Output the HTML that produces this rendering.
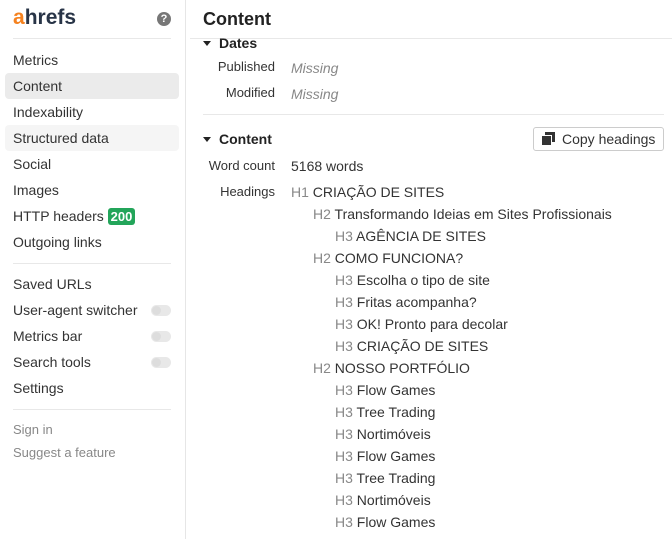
<!DOCTYPE html>
<html><head><meta charset="utf-8"><style>
*{margin:0;padding:0;box-sizing:border-box}
body{width:672px;height:539px;overflow:hidden;background:#fff;font-family:"Liberation Sans",sans-serif;font-size:14px;color:#333;position:relative}
.a{position:absolute;white-space:nowrap;line-height:18px}
.side{position:absolute;left:0;top:0;width:186px;height:539px;border-right:1px solid #e6e6e6}
.hl{position:absolute;left:5px;width:174px;height:26px;border-radius:4px}
.hr{position:absolute;height:1px;background:#e8e8e8}
.tg{position:absolute;left:151px;width:20px;height:11px;border-radius:6px;background:#e8e8e8}
.tg:after{content:"";position:absolute;left:1px;top:1px;width:9px;height:9px;border-radius:50%;background:#ddd}
.lab{text-align:right;width:85px;left:190px;font-size:13px}
.g{color:#888}
.b{font-weight:bold;color:#222}
.tri{position:absolute;width:0;height:0;border-left:4px solid transparent;border-right:4px solid transparent;border-top:5px solid #222}
</style></head><body>
<div class="side">
<div class="a" style="left:13px;top:6px;font-size:21px;font-weight:bold;line-height:24px;letter-spacing:0;color:#283447"><span style="color:#f5821f">a</span>hrefs</div>
<div style="position:absolute;left:157px;top:12px;width:14px;height:14px;border-radius:50%;background:#777;color:#fff;font-size:11px;font-weight:bold;text-align:center;line-height:14px">?</div>
<div class="hr" style="left:13px;top:38px;width:158px"></div>
<div class="hl" style="top:73px;background:#ebebeb"></div>
<div class="hl" style="top:125px;background:#f5f5f5"></div>
<div class="a" style="left:13px;top:51px">Metrics</div>
<div class="a" style="left:13px;top:77px">Content</div>
<div class="a" style="left:13px;top:103px">Indexability</div>
<div class="a" style="left:13px;top:129px">Structured data</div>
<div class="a" style="left:13px;top:155px">Social</div>
<div class="a" style="left:13px;top:181px">Images</div>
<div class="a" style="left:13px;top:207px">HTTP headers <span style="background:#23a55a;color:#fff;font-weight:bold;font-size:13px;padding:1px 3px;border-radius:3px">200</span></div>
<div class="a" style="left:13px;top:233px">Outgoing links</div>
<div class="hr" style="left:13px;top:263px;width:158px"></div>
<div class="a" style="left:13px;top:275px">Saved URLs</div>
<div class="a" style="left:13px;top:301px">User-agent switcher</div><div class="tg" style="top:305px"></div>
<div class="a" style="left:13px;top:327px">Metrics bar</div><div class="tg" style="top:331px"></div>
<div class="a" style="left:13px;top:353px">Search tools</div><div class="tg" style="top:357px"></div>
<div class="a" style="left:13px;top:379px">Settings</div>
<div class="hr" style="left:13px;top:409px;width:158px"></div>
<div class="a g" style="left:13px;top:421px;font-size:13px">Sign in</div>
<div class="a g" style="left:13px;top:444px;font-size:13px">Suggest a feature</div>
</div>
<div class="a b" style="left:203px;top:8px;font-size:18px;line-height:22px">Content</div>
<div class="hr" style="left:190px;top:38px;width:482px"></div>
<div class="tri" style="left:203px;top:41px"></div>
<div class="a b" style="left:219px;top:34px">Dates</div>
<div class="a lab" style="top:58px">Published</div>
<div class="a g" style="left:291px;top:59px;font-style:italic">Missing</div>
<div class="a lab" style="top:84px">Modified</div>
<div class="a g" style="left:291px;top:85px;font-style:italic">Missing</div>
<div class="hr" style="left:203px;top:114px;width:461px"></div>
<div class="tri" style="left:203px;top:137px"></div>
<div class="a b" style="left:219px;top:130px">Content</div>
<div style="position:absolute;left:533px;top:127px;width:131px;height:24px;border:1px solid #ccc;border-radius:3px"></div>
<div style="position:absolute;left:545px;top:132px;width:10px;height:10px;background:#333"></div>
<div style="position:absolute;left:541px;top:135px;width:11px;height:11px;background:#333;border:1px solid #fff"></div>
<div class="a" style="left:562px;top:130px">Copy headings</div>
<div class="a lab" style="top:157px">Word count</div>
<div class="a" style="left:291px;top:157px">5168 words</div>
<div class="a lab" style="top:183px">Headings</div>
<div class="a" style="left:291px;top:183px"><span class="g">H1</span> CRIAÇÃO DE SITES</div>
<div class="a" style="left:313px;top:205px"><span class="g">H2</span> Transformando Ideias em Sites Profissionais</div>
<div class="a" style="left:335px;top:227px"><span class="g">H3</span> AGÊNCIA DE SITES</div>
<div class="a" style="left:313px;top:249px"><span class="g">H2</span> COMO FUNCIONA?</div>
<div class="a" style="left:335px;top:271px"><span class="g">H3</span> Escolha o tipo de site</div>
<div class="a" style="left:335px;top:293px"><span class="g">H3</span> Fritas acompanha?</div>
<div class="a" style="left:335px;top:315px"><span class="g">H3</span> OK! Pronto para decolar</div>
<div class="a" style="left:335px;top:337px"><span class="g">H3</span> CRIAÇÃO DE SITES</div>
<div class="a" style="left:313px;top:359px"><span class="g">H2</span> NOSSO PORTFÓLIO</div>
<div class="a" style="left:335px;top:381px"><span class="g">H3</span> Flow Games</div>
<div class="a" style="left:335px;top:403px"><span class="g">H3</span> Tree Trading</div>
<div class="a" style="left:335px;top:425px"><span class="g">H3</span> Nortimóveis</div>
<div class="a" style="left:335px;top:447px"><span class="g">H3</span> Flow Games</div>
<div class="a" style="left:335px;top:469px"><span class="g">H3</span> Tree Trading</div>
<div class="a" style="left:335px;top:491px"><span class="g">H3</span> Nortimóveis</div>
<div class="a" style="left:335px;top:513px"><span class="g">H3</span> Flow Games</div>
</body></html>
